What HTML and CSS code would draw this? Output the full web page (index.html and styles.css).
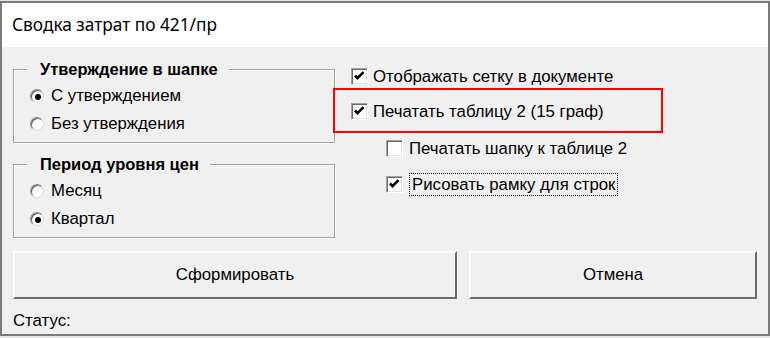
FILE: index.html
```html
<!DOCTYPE html>
<html lang="ru">
<head>
<meta charset="utf-8">
<title>Сводка затрат по 421/пр</title>
<link rel="stylesheet" href="styles.css">
</head>
<body>
<div class="window">
  <div class="titlebar">Сводка затрат по 421/пр</div>
  <div class="content">
    <div class="top">
      <div class="left">
        <div class="group">
          <div class="group-title">Утверждение в шапке</div>
          <div class="radio-row first"><span class="radio checked"></span><span>С утверждением</span></div>
          <div class="radio-row"><span class="radio"></span><span>Без утверждения</span></div>
        </div>
        <div class="group group2">
          <div class="group-title">Период уровня цен</div>
          <div class="radio-row first"><span class="radio"></span><span>Месяц</span></div>
          <div class="radio-row"><span class="radio checked"></span><span>Квартал</span></div>
        </div>
      </div>
      <div class="right">
        <div class="check-row row1">
          <span class="cb"><svg viewBox="0 0 15 15" width="15" height="15"><polyline points="3,6.5 5.5,9.2 11.5,3.2" fill="none" stroke="#000" stroke-width="2.6"/></svg></span>
          <span>Отображать сетку в документе</span>
        </div>
        <div class="check-row row2">
          <span class="cb"><svg viewBox="0 0 15 15" width="15" height="15"><polyline points="3,6.5 5.5,9.2 11.5,3.2" fill="none" stroke="#000" stroke-width="2.6"/></svg></span>
          <span>Печатать таблицу 2 (15 граф)</span>
        </div>
        <div class="check-row sub row3">
          <span class="cb"></span>
          <span>Печатать шапку к таблице 2</span>
        </div>
        <div class="check-row sub row4">
          <span class="cb"><svg viewBox="0 0 15 15" width="15" height="15"><polyline points="3,6.5 5.5,9.2 11.5,3.2" fill="none" stroke="#000" stroke-width="2.6"/></svg></span>
          <span class="focus">Рисовать рамку для строк</span>
        </div>
      </div>
    </div>
    <div class="buttons">
      <div class="btn btn-main">Сформировать</div>
      <div class="btn btn-cancel">Отмена</div>
    </div>
    <div class="status">Статус:</div>
    <div class="highlight"></div>
  </div>
</div>
</body>
</html>
```
FILE: styles.css
```css
html, body {
  margin: 0;
  padding: 0;
  height: 338px;
  overflow: hidden;
  background: #e4e4e4;
}

.window {
  margin-top: 1px;
  height: 335px;
  box-sizing: border-box;
  border: 2px solid #7a7a7a;
  background: #f0f0f0;
  display: flex;
  flex-direction: column;
}

.titlebar {
  height: 44px;
  background: #fff;
  padding-left: 10px;
  font-family: "Noto Sans", "Open Sans", sans-serif;
  font-size: 17.3px;
  line-height: 44px;
  color: #000;
  white-space: nowrap;
}

.content {
  position: relative;
  flex: 1;
  padding: 0 11px;
  font-family: "Liberation Sans", Arial, sans-serif;
  font-size: 16.8px;
  color: #000;
}

.top {
  display: flex;
  gap: 16px;
}

.left {
  width: 322px;
  padding-top: 22px;
}

.group {
  border: 1px solid #a0a0a0;
  box-shadow: 1px 1px 0 #fff, inset 1px 1px 0 #fff;
  padding-bottom: 4px;
}

.group2 {
  margin-top: 21px;
}

.group-title {
  width: fit-content;
  margin: -11px 0 0 13px;
  padding: 0 11px 0 13px;
  line-height: 20px;
  font-size: 16.5px;
  font-weight: bold;
  background: #f0f0f0;
}

.radio-row {
  height: 28px;
  display: flex;
  align-items: center;
  gap: 7px;
  padding-left: 16px;
}

.radio-row.first {
  margin-top: 3px;
}

.radio {
  width: 14px;
  height: 14px;
  box-sizing: border-box;
  border-radius: 50%;
  background: #fff;
  border: 1px solid;
  border-color: #8a8a8a #dcdcdc #dcdcdc #8a8a8a;
  box-shadow: inset 1px 1px 0 #5a5a5a;
  display: flex;
  align-items: center;
  justify-content: center;
}

.radio.checked::after {
  content: "";
  width: 6px;
  height: 6px;
  border-radius: 50%;
  background: #000;
  margin: 1px 0 0 1px;
}

.right {
  display: flex;
  flex-direction: column;
  padding-top: 19px;
}

.check-row {
  height: 21px;
  display: flex;
  align-items: center;
  gap: 5px;
  white-space: nowrap;
}

.check-row.sub {
  padding-left: 35px;
  gap: 6px;
}

.row2 { margin-top: 14px; }
.row3 { margin-top: 16px; }
.row4 { margin-top: 14px; height: 23px; gap: 3px; }

.cb {
  width: 17px;
  height: 17px;
  box-sizing: border-box;
  background: #fff;
  border: 1px solid;
  border-color: #a0a0a0 #fff #fff #a0a0a0;
  box-shadow: inset 1px 1px 0 #696969, inset -1px -1px 0 #e3e3e3;
  display: flex;
  flex: none;
}

.cb svg {
  display: block;
}

.focus {
  border: 1px dotted #000;
  padding: 0 2px;
  line-height: 21px;
}

.buttons {
  display: flex;
  gap: 12px;
  margin-top: 13px;
  height: 48px;
}

.btn {
  box-sizing: border-box;
  height: 48px;
  border: 2px solid;
  border-color: #fff #6b6b6b #6b6b6b #fff;
  background: #f0f0f0;
  display: flex;
  align-items: center;
  justify-content: center;
}

.btn-main { width: 444px; }
.btn-cancel { width: 288px; }

.status {
  margin-top: 12px;
  line-height: 20px;
}

.highlight {
  position: absolute;
  left: 331px;
  top: 41px;
  width: 330px;
  height: 45px;
  box-sizing: border-box;
  border: 2px solid #ff0000;
}
```
